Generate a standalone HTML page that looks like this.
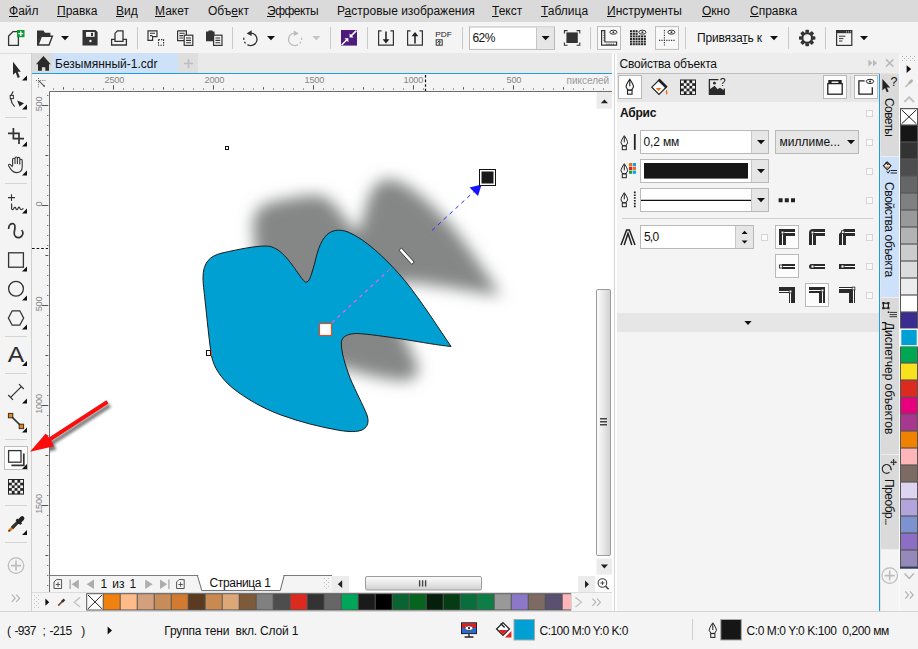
<!DOCTYPE html>
<html lang="ru">
<head>
<meta charset="utf-8">
<title>CorelDRAW</title>
<style>
html,body{margin:0;padding:0;}
body{width:918px;height:649px;overflow:hidden;position:relative;background:#f4f4f4;
 font-family:"Liberation Sans","DejaVu Sans",sans-serif;font-size:12px;color:#111;}
.a{position:absolute;}
.t{position:absolute;white-space:nowrap;line-height:16px;font-size:12px;}
u{text-decoration:underline;text-underline-offset:1px;}
#menubar{left:0;top:0;width:918px;height:22px;background:#dadada;}
#toolbar{left:0;top:22px;width:918px;height:31px;background:#f4f4f4;}
#tabstrip{left:32px;top:53px;width:580px;height:20px;background:#e9e9e9;}
#doctab{left:51px;top:53px;width:127px;height:20px;background:#cde2f9;}
#blueline{left:32px;top:73px;width:580px;height:1.200px;background:#1a9ff0;}
#hruler{left:32px;top:74px;width:580px;height:18px;background:#f4f4f4;}
#vruler{left:32px;top:92px;width:18px;height:483px;background:#f4f4f4;}
#canvas{left:50px;top:92px;width:546px;height:483px;background:#fff;}
#vscroll{left:596px;top:92px;width:16px;height:483px;background:#f4f4f4;}
#pagenav{left:50px;top:575px;width:562px;height:17px;background:#f4f4f4;}
#palbar{left:32px;top:592px;width:580px;height:20px;background:#f4f4f4;}
#status{left:0;top:612px;width:918px;height:37px;background:#f4f4f4;}
#toolbox{left:0;top:53px;width:32px;height:559px;background:#f4f4f4;}
#docker{left:612px;top:53px;width:268px;height:559px;background:#f4f4f4;}
#vtabs{left:880px;top:53px;width:18px;height:559px;background:#e4e4e4;}
#rpal{left:898px;top:53px;width:20px;height:559px;background:#f4f4f4;}

.rl{top:73px;font-size:9.200px;letter-spacing:-0.200px;line-height:14px;}
.rv{left:39.200px;font-size:9.200px;letter-spacing:-0.200px;line-height:10px;transform:translate(-50%,-50%) rotate(-90deg);}

.vt{left:897px;font-size:12px;line-height:16px;transform-origin:0 0;transform:rotate(90deg);}
#tbline{left:0;top:53px;width:918px;height:1px;background:#dedede;}
</style>
</head>
<body>
<div id="menubar" class="a"></div>
<div id="toolbar" class="a"></div>
<div id="toolbox" class="a"></div>
<div id="tbline" class="a"></div>
<div id="tabstrip" class="a"></div>
<div id="doctab" class="a"></div>
<div id="blueline" class="a"></div>
<div id="hruler" class="a"></div>
<div id="vruler" class="a"></div>
<div id="canvas" class="a"></div>
<div id="vscroll" class="a"></div>
<div id="pagenav" class="a"></div>
<div id="palbar" class="a"></div>
<div id="docker" class="a"></div>
<div id="vtabs" class="a"></div>
<div id="rpal" class="a"></div>
<div id="status" class="a"></div>

<!-- MENU -->
<div id="menu">
<span class="t" style="left:9px;top:3px"><u>Ф</u>айл</span>
<span class="t" style="left:57px;top:3px"><u>П</u>равка</span>
<span class="t" style="left:116px;top:3px"><u>В</u>ид</span>
<span class="t" style="left:155px;top:3px"><u>М</u>акет</span>
<span class="t" style="left:208px;top:3px">Объ<u>е</u>кт</span>
<span class="t" style="left:267px;top:3px;letter-spacing:-0.500px"><u>Э</u>ффекты</span>
<span class="t" style="left:337px;top:3px">Р<u>а</u>стровые изображения</span>
<span class="t" style="left:492px;top:3px"><u>Т</u>екст</span>
<span class="t" style="left:541px;top:3px"><u>Т</u>аблица</span>
<span class="t" style="left:607px;top:3px"><u>И</u>нструменты</span>
<span class="t" style="left:702px;top:3px"><u>О</u>кно</span>
<span class="t" style="left:750px;top:3px"><u>С</u>правка</span>
</div>

<!-- TOOLBAR ICONS -->
<svg class="a" style="left:0;top:22px" width="918" height="32" viewBox="0 22 918 32" fill="none" stroke="#333" stroke-width="1.3">
<g stroke="#c9c9c9" stroke-width="1">
<path d="M137.5 27V49M232.5 27V49M330.5 27V49M367.5 27V49M462.5 27V49M590.5 27V49M685.5 27V49M788.5 27V49M825.5 27V49"/>
</g>
<!-- new -->
<path d="M8.6 45.4V36L13 31.6H18.4V45.4Z"/>
<rect x="17" y="30" width="7.5" height="7.2" fill="#0a9a2e" stroke="none"/>
<path d="M18.3 33.6H23.2M20.75 31.2V36" stroke="#fff" stroke-width="1.4"/>
<!-- open -->
<path d="M37 45.6V30.6H43.4L45 32.8H50.4V36H41L37.6 45.6Z" fill="#333" stroke="none"/>
<path d="M38 45 41.4 36.2H52.4L49 45Z" fill="#f4f4f4" stroke-width="1.4"/>
<path d="M61 36H69L65 40.2Z" fill="#111" stroke="none"/>
<!-- save -->
<path d="M82.5 30H95.5L97.6 32V45.6H82.5Z" fill="#333" stroke="none"/>
<rect x="86" y="32" width="8.6" height="4.8" fill="#f4f4f4" stroke="none"/>
<rect x="91" y="32.8" width="2" height="3.2" fill="#333" stroke="none"/>
<circle cx="90.4" cy="41" r="1.2" fill="#f4f4f4" stroke="none"/>
<!-- print -->
<path d="M115 39.4H111.6V45H126.4V39.4H123"/>
<path d="M115 41.4V33.4L117.4 30.8H123V41.4Z"/>
<!-- cut -->
<path d="M148 30.8H157V36.6H152.6V40.4H148Z" stroke-width="1.2"/>
<path d="M150 33.2H155M150 35.6H152.4" stroke-width="1.1"/>
<path d="M158.5 39.6H163.6V45.2H158.5Z" stroke-width="1.1" stroke-dasharray="1.4 1.1"/>
<!-- copy -->
<path d="M177.6 30.8H186.4V35M184 40.6H177.6V30.8" stroke-width="1.2"/>
<path d="M179.4 33.2H184.6M179.4 35.6H183M179.4 38H183" stroke-width="1.1"/>
<rect x="184.2" y="35.2" width="8.6" height="10.2" stroke-width="1.2"/>
<path d="M186 38H191M186 40.4H191M186 42.8H191" stroke-width="1.1"/>
<!-- paste -->
<path d="M206 31.6H208.4V30.4H212.6V31.6H214.6V35H213V41.2H206Z" fill="#333" stroke="none"/>
<rect x="213.6" y="35.2" width="8.4" height="10.2" stroke-width="1.2"/>
<path d="M215.4 38H220.2M215.4 40.4H220.2M215.4 42.8H220.2" stroke-width="1.1"/>
<!-- undo -->
<path d="M250.8 33.2A6.2 6.2 0 1 1 247.4 44.6" stroke-width="1.3"/>
<path d="M245.6 43.4A6.2 6.2 0 0 1 244.6 36" stroke-width="1.3" stroke-dasharray="2 2"/>
<path d="M246.6 33.4 251.6 30.2V36Z" fill="#333" stroke="none"/>
<path d="M267 36H275L271 40.2Z" fill="#111" stroke="none"/>
<!-- redo -->
<g stroke="#bdbdbd">
<path d="M294.6 33.2A6.2 6.2 0 1 0 298 44.6" stroke-width="1.3"/>
<path d="M299.8 43.4A6.2 6.2 0 0 0 300.8 36" stroke-width="1.3" stroke-dasharray="2 2"/>
<path d="M298.8 33.4 293.8 30.2V36Z" fill="#bdbdbd" stroke="none"/>
<path d="M312.4 36H320.4L316.4 40.2Z" fill="#c4c4c4" stroke="none"/>
</g>
<!-- purple -->
<rect x="341" y="30" width="16" height="15.6" fill="#4d1b7b" stroke="none"/>
<path d="M356.4 30.6 350.6 36.4M341.6 45 347.4 39.2" stroke="#fff" stroke-width="1.5"/>
<path d="M349.6 33.4V37.4H353.6ZM348.4 42.2V38.2H344.4Z" fill="#fff" stroke="none"/>
<!-- import -->
<path d="M381.6 30.8H378.6V45.2H393.4V30.8H390.4" stroke-width="1.2"/>
<path d="M386 31.6V40" stroke-width="1.7"/><path d="M382.6 39.2H389.4L386 43.4Z" fill="#222" stroke="none"/>
<!-- export -->
<path d="M410.6 30.8H407.6V45.2H422.4V30.8H419.4" stroke-width="1.2"/>
<path d="M415 35V43.6" stroke-width="1.7"/><path d="M411.6 36.2H418.4L415 32Z" fill="#222" stroke="none"/>
<!-- pdf -->
<text x="435.2" y="37" font-size="8" fill="#222" stroke="none" font-family="Liberation Sans, sans-serif" textLength="16.6" lengthAdjust="spacingAndGlyphs">PDF</text>
<rect x="436.2" y="39.8" width="6" height="5.4" stroke-width="1"/>
<path d="M439.2 45V41.4M437.4 42.6 439.2 40.8 441 42.6" stroke-width="1"/>
<!-- zoom box -->
<rect x="469.5" y="27" width="85" height="22.4" fill="#fff" stroke="#b9b9b9" stroke-width="1"/>
<rect x="536.6" y="27.5" width="17.4" height="21.4" fill="#e6e6e6" stroke="none"/>
<path d="M536.5 27.5V49" stroke="#c6c6c6" stroke-width="1"/>
<path d="M541.6 36H549.6L545.6 40.2Z" fill="#111" stroke="none"/>
<!-- fullscreen -->
<rect x="566.4" y="32.4" width="11.4" height="10.6" fill="#333" stroke="none"/>
<path d="M564.4 33.4V30.6H567.6M576.6 30.6H579.8V33.4M579.8 42.4V45.2H576.6M567.6 45.2H564.4V42.4" stroke-width="1.1"/>
<!-- rulers btn -->
<rect x="597.5" y="26.6" width="23" height="22.8" fill="#f9f9f9" stroke="#bdbdbd" stroke-width="1"/>
<path d="M601.6 30.6H604.8V42H616.6V45.2H601.6Z" stroke-width="1.2"/>
<path d="M603.4 33H604.8M603.4 35.4H604.8M603.4 37.8H604.8M603.4 40.2H604.8M606.8 43.6V45M609 43.6V45M611.2 43.6V45M613.4 43.6V45" stroke-width="0.9"/>
<ellipse cx="613.4" cy="32.2" rx="3.6" ry="2" stroke-width="1"/><circle cx="613.4" cy="32.2" r="1" fill="#333" stroke="none"/>
<!-- grid -->
<g fill="#2a2a2a" stroke="none"><rect x="630.00" y="30.20" width="2.100" height="2" /><rect x="632.75" y="30.20" width="2.100" height="2" /><rect x="635.50" y="30.20" width="2.100" height="2" /><rect x="630.00" y="32.80" width="2.100" height="2" /><rect x="632.75" y="32.80" width="2.100" height="2" /><rect x="635.50" y="32.80" width="2.100" height="2" /><rect x="630.00" y="35.40" width="2.100" height="2" /><rect x="632.75" y="35.40" width="2.100" height="2" /><rect x="635.50" y="35.40" width="2.100" height="2" /><rect x="638.25" y="35.40" width="2.100" height="2" /><rect x="641.00" y="35.40" width="2.100" height="2" /><rect x="643.75" y="35.40" width="2.100" height="2" /><rect x="630.00" y="38.00" width="2.100" height="2" /><rect x="632.75" y="38.00" width="2.100" height="2" /><rect x="635.50" y="38.00" width="2.100" height="2" /><rect x="638.25" y="38.00" width="2.100" height="2" /><rect x="641.00" y="38.00" width="2.100" height="2" /><rect x="643.75" y="38.00" width="2.100" height="2" /><rect x="630.00" y="40.60" width="2.100" height="2" /><rect x="632.75" y="40.60" width="2.100" height="2" /><rect x="635.50" y="40.60" width="2.100" height="2" /><rect x="638.25" y="40.60" width="2.100" height="2" /><rect x="641.00" y="40.60" width="2.100" height="2" /><rect x="643.75" y="40.60" width="2.100" height="2" /><rect x="630.00" y="43.20" width="2.100" height="2" /><rect x="632.75" y="43.20" width="2.100" height="2" /><rect x="635.50" y="43.20" width="2.100" height="2" /><rect x="638.25" y="43.20" width="2.100" height="2" /><rect x="641.00" y="43.20" width="2.100" height="2" /><rect x="643.75" y="43.20" width="2.100" height="2" /></g>
<ellipse cx="642.400" cy="32.200" rx="3.600" ry="2" stroke-width="1" fill="#f4f4f4"/><circle cx="642.400" cy="32.200" r="1" fill="#333" stroke="none"/>
<!-- guides btn -->
<rect x="655.5" y="26.6" width="23" height="22.8" fill="#f9f9f9" stroke="#bdbdbd" stroke-width="1"/>
<path d="M664.4 30V46M659 40.4H675" stroke-width="1.1" stroke-dasharray="1.2 1.2"/>
<ellipse cx="671.4" cy="32.2" rx="3.6" ry="2" stroke-width="1"/><circle cx="671.4" cy="32.2" r="1" fill="#333" stroke="none"/>
<path d="M770 36H778L774 40.2Z" fill="#111" stroke="none"/>
<!-- gear -->
<g transform="translate(807.200 38)">
<circle r="4.900" stroke-width="2.300"/>
<g fill="#333" stroke="none">
<rect x="-1.800" y="-8.200" width="3.600" height="2.800" rx="0.800"/><rect x="-1.800" y="5.400" width="3.600" height="2.800" rx="0.800"/>
<rect x="-8.200" y="-1.800" width="2.800" height="3.600" rx="0.800"/><rect x="5.400" y="-1.800" width="2.800" height="3.600" rx="0.800"/>
<g transform="rotate(45)"><rect x="-1.800" y="-8.200" width="3.600" height="2.800" rx="0.800"/><rect x="-1.800" y="5.400" width="3.600" height="2.800" rx="0.800"/>
<rect x="-8.200" y="-1.800" width="2.800" height="3.600" rx="0.800"/><rect x="5.400" y="-1.800" width="2.800" height="3.600" rx="0.800"/></g>
</g></g>
<!-- window -->
<rect x="836.6" y="30.6" width="15.2" height="14.8" stroke-width="1.2"/>
<rect x="836.6" y="30.6" width="15.2" height="2.6" fill="#333" stroke="none"/>
<path d="M839 36.2H845.4M839 38.6H843.4M839 41H842.4" stroke-width="1"/>
<path d="M846 31.9H847M848 31.9H849M850 31.9H851" stroke="#eee" stroke-width="0.8"/>
<path d="M860 36H868L864 40.2Z" fill="#111" stroke="none"/>
</svg>
<span class="t" style="left:472.500px;top:30px;letter-spacing:-0.550px">62%</span>
<span class="t" style="left:697px;top:30px;letter-spacing:-0.200px">Привяза<u>т</u>ь к</span>

<!-- TOOLBOX -->
<svg class="a" style="left:0;top:53px" width="50" height="559" viewBox="0 53 50 559" fill="none" stroke="#333" stroke-width="1.3">
<path d="M31.5 53V611" stroke="#d0d0d0" stroke-width="1"/>
<g stroke="#d4d4d4" stroke-width="1"><path d="M5 117.5H27M5 183.5H27M5 336.5H27M5 373.5H27M5 439.5H27M5 505.5H27M5 542.5H27"/></g>
<!-- pick -->
<path d="M13 61.800V74.800L15.700 72.500L17.700 77.900L19.800 77L17.700 71.700H20.800Z" fill="#2a2a2a" stroke="none"/>
<path d="M27 80.6V75.6L22 80.6Z" fill="#111" stroke="none"/>
<!-- shape -->
<path d="M13.2 91.4C9.6 96 10.2 102.4 14.6 106.6" stroke-width="1.2"/>
<rect x="10.2" y="95.4" width="3.2" height="3.2" fill="#f4f4f4" stroke-width="1"/>
<path d="M17.2 100.4 24 103.2 19.6 106.6Z" fill="#222" stroke="none"/>
<path d="M27 109.6V104.6L22 109.6Z" fill="#111" stroke="none"/>
<!-- crop -->
<path d="M13.400 128V138.600H24M8 133.400H19V144" stroke-width="1.700"/>
<path d="M27 146.6V141.6L22 146.6Z" fill="#111" stroke="none"/>
<!-- hand -->
<path d="M12.6 166V159.4a1.2 1.2 0 0 1 2.4 0V164M15 164V158.2a1.2 1.2 0 0 1 2.4 0V164M17.4 164V158.6a1.2 1.2 0 0 1 2.4 0V164.4M19.8 164.4V160.4a1.2 1.2 0 0 1 2.4 0V167C22.2 170.6 20 172.6 16.8 172.6C13.6 172.6 12 171 10.4 168.6L8.6 165.8C8 164.6 9.400 163.800 10.4 164.6L12.6 167" stroke-width="1.1"/>
<path d="M27 175.6V170.6L22 175.6Z" fill="#111" stroke="none"/>
<!-- freehand -->
<path d="M8 197.600H15M11.500 194.200V201" stroke-width="1.100"/>
<path d="M11.600 203.400V208.400C11.600 210 13.400 210 13.800 208.600C14.200 206.800 15.400 206.800 15.800 208.400C16.200 210 17.600 210 18 208.400C18.400 206.800 19.600 206.800 20 208.400C20.400 209.800 21.600 210 23.400 208.400" stroke-width="1.200"/>
<path d="M27 213.4V208.4L22 213.4Z" fill="#111" stroke="none"/>
<!-- artistic -->
<path d="M8.600 229C8.600 224.600 11.400 223 13.400 223.800C16.400 225 14.600 229.600 14.200 232.400C13.800 236.400 16.800 238.400 19.800 237.400C23 236.200 24 232.400 21.600 230" stroke-width="1.700"/>
<!-- rect -->
<rect x="8.600" y="252.800" width="14.800" height="14.400" stroke-width="1.300"/>
<path d="M27 271.4V266.4L22 271.4Z" fill="#111" stroke="none"/>
<!-- ellipse -->
<circle cx="16" cy="288.800" r="7.400" stroke-width="1.300"/>
<path d="M27 300.4V295.4L22 300.4Z" fill="#111" stroke="none"/>
<!-- polygon -->
<path d="M8.400 318 12.200 310.800H19.800L23.600 318L19.800 325.200H12.200Z" stroke-width="1.300"/>
<path d="M27 329.4V324.4L22 329.4Z" fill="#111" stroke="none"/>
<!-- text -->
<text x="7.800" y="362.400" font-size="21.500" textLength="16.400" lengthAdjust="spacingAndGlyphs" fill="#2e2e2e" stroke="none" font-family="Liberation Sans, sans-serif">A</text>
<path d="M27 366V361.0L22 366Z" fill="#111" stroke="none"/>
<!-- dimension -->
<path d="M10.600 397.400 21.400 386.600" stroke-width="1.300"/>
<path d="M8.200 395 13 399.800M19 384.200 23.800 389" stroke-width="1.200"/>
<path d="M27 403.4V398.4L22 403.4Z" fill="#111" stroke="none"/>
<!-- connector -->
<path d="M10.600 415.600 21.400 426.400" stroke-width="1.500"/>
<rect x="8.400" y="413.400" width="4.400" height="4.400" fill="#f08010" stroke-width="1"/>
<rect x="19.200" y="424.200" width="4.400" height="4.400" fill="#f08010" stroke-width="1"/>
<path d="M27 432.4V427.4L22 432.4Z" fill="#111" stroke="none"/>
<!-- shadow (selected) -->
<rect x="4.500" y="446.500" width="23" height="23" fill="#fcfcfc" stroke="#bdbdbd" stroke-width="1"/>
<rect x="8.600" y="450.600" width="12.400" height="11.600" fill="#fff" stroke-width="1.300"/>
<path d="M23.800 453.400V465.400H11.400" stroke-width="1.700"/>
<path d="M27 469V464.0L22 469Z" fill="#111" stroke="none"/>
<!-- transparency -->
<rect x="8" y="479" width="16" height="15.600" fill="#222" stroke="none"/>
<g fill="#f4f4f4" stroke="none">
<rect x="9" y="480" width="2.800" height="2.700"/><rect x="14.600" y="480" width="2.800" height="2.700"/><rect x="20.200" y="480" width="2.800" height="2.700"/>
<rect x="11.800" y="482.700" width="2.800" height="2.700"/><rect x="17.400" y="482.700" width="2.800" height="2.700"/>
<rect x="9" y="485.400" width="2.800" height="2.700"/><rect x="14.600" y="485.400" width="2.800" height="2.700"/><rect x="20.200" y="485.400" width="2.800" height="2.700"/>
<rect x="11.800" y="488.100" width="2.800" height="2.700"/><rect x="17.400" y="488.100" width="2.800" height="2.700"/>
<rect x="9" y="490.800" width="2.800" height="2.700"/><rect x="14.600" y="490.800" width="2.800" height="2.700"/><rect x="20.200" y="490.800" width="2.800" height="2.700"/>
</g>
<!-- eyedropper -->
<path d="M9 531 17.400 522.600" stroke="#e8740c" stroke-width="2.600"/>
<path d="M12 528 18.600 521.400" stroke="#333" stroke-width="3.200"/>
<path d="M8.400 531.600 9.800 530.200" stroke="#333" stroke-width="1.400"/>
<path d="M16.400 519.400 21.200 524.200" stroke="#222" stroke-width="2.400"/>
<path d="M19 521.600 22.200 518.400" stroke="#222" stroke-width="4.400" stroke-linecap="round"/>
<path d="M27 535V530.0L22 535Z" fill="#111" stroke="none"/>
<!-- plus -->
<circle cx="16" cy="565.600" r="7.800" stroke="#bcbcbc" stroke-width="1.200"/>
<path d="M11 565.600H21M16 560.600V570.600" stroke="#bcbcbc" stroke-width="1.600"/>
<path d="M11.800 594.600 15.200 598.200 11.800 601.800M16.200 594.600 19.600 598.200 16.200 601.800" stroke="#b0b0b0" stroke-width="1.100"/>
</svg>

<!-- DOC TAB + RULERS -->
<div class="a" style="left:32px;top:53px;width:19.500px;height:20px;background:#dbdbdb"></div>
<div class="a" style="left:178px;top:53px;width:20px;height:20px;background:#dedede"></div>
<svg class="a" style="left:32px;top:53px" width="585" height="560" viewBox="32 53 585 560" fill="none" stroke="#333">
<path d="M43.400 56 36 64.300H38V70.800H41.900V67.300H45.300V70.800H49V64.300H50.800Z" fill="#2a2a2a" stroke="none"/>
<path d="M184 63.5H193M188.500 59V68" stroke="#bdbdbd" stroke-width="1.600"/>
<!-- origin icon -->
<path d="M38.400 80.400 44 85.800" stroke="#555" stroke-width="1.100"/>
<path d="M36 80.500H46M38.500 78V88" stroke="#777" stroke-width="1" stroke-dasharray="1 1.100"/>
<rect x="43.400" y="85.200" width="1.600" height="1.600" fill="#555" stroke="none"/>
<path d="M53.5 88.5V89.6M63.5 87.2V89.6M73.5 88.5V89.6M83.5 88.5V89.6M93.5 88.5V89.6M103.5 88.5V89.6M113.5 85.2V89.6M123.5 88.5V89.6M133.5 88.5V89.6M143.5 88.5V89.6M153.5 88.5V89.6M163.5 87.2V89.6M173.5 88.5V89.6M183.5 88.5V89.6M193.5 88.5V89.6M203.5 88.5V89.6M213.5 85.2V89.6M223.5 88.5V89.6M233.5 88.5V89.6M243.5 88.5V89.6M253.5 88.5V89.6M263.5 87.2V89.6M273.5 88.5V89.6M283.5 88.5V89.6M293.5 88.5V89.6M303.5 88.5V89.6M313.5 85.2V89.6M323.5 88.5V89.6M333.5 88.5V89.6M343.5 88.5V89.6M353.5 88.5V89.6M363.5 87.2V89.6M373.5 88.5V89.6M383.5 88.5V89.6M393.5 88.5V89.6M403.5 88.5V89.6M413.5 85.2V89.6M423.5 88.5V89.6M433.5 88.5V89.6M443.5 88.5V89.6M453.5 88.5V89.6M463.5 87.2V89.6M473.5 88.5V89.6M483.5 88.5V89.6M493.5 88.5V89.6M503.5 88.5V89.6M513.5 85.2V89.6M523.5 88.5V89.6M533.5 88.5V89.6M543.5 88.5V89.6M553.5 88.5V89.6M563.5 87.2V89.6M573.5 88.5V89.6M583.5 88.5V89.6M593.5 88.5V89.6M603.5 88.5V89.6" stroke="#555" stroke-width="1"/>
<path d="M47.2 95.5H48.3M41.6 105.5H48.3M47.2 115.5H48.3M47.2 125.5H48.3M47.2 135.5H48.3M47.2 145.5H48.3M45.4 155.5H48.3M47.2 165.5H48.3M47.2 175.5H48.3M47.2 185.5H48.3M47.2 195.5H48.3M41.6 205.5H48.3M47.2 215.5H48.3M47.2 225.5H48.3M47.2 235.5H48.3M47.2 245.5H48.3M45.4 255.5H48.3M47.2 265.5H48.3M47.2 275.5H48.3M47.2 285.5H48.3M47.2 295.5H48.3M41.6 305.5H48.3M47.2 315.5H48.3M47.2 325.5H48.3M47.2 335.5H48.3M47.2 345.5H48.3M45.4 355.5H48.3M47.2 365.5H48.3M47.2 375.5H48.3M47.2 385.5H48.3M47.2 395.5H48.3M41.6 405.5H48.3M47.2 415.5H48.3M47.2 425.5H48.3M47.2 435.5H48.3M47.2 445.5H48.3M45.4 455.5H48.3M47.2 465.5H48.3M47.2 475.5H48.3M47.2 485.5H48.3M47.2 495.5H48.3M41.6 505.5H48.3M47.2 515.5H48.3M47.2 525.5H48.3M47.2 535.5H48.3M47.2 545.5H48.3M45.4 555.5H48.3M47.2 565.5H48.3M47.2 575.5H48.3M47.2 585.5H48.3" stroke="#555" stroke-width="1"/>
<path d="M49.500 592V91.500H612" stroke="#6e6e6e" stroke-width="1"/>
<path d="M32 248.500H48" stroke="#111" stroke-width="1.200" stroke-dasharray="2.600 2"/>
<path d="M425.500 75V91" stroke="#111" stroke-width="1.200" stroke-dasharray="2.600 2"/>
</svg>
<span class="t" style="left:55px;top:56px;font-size:12px;color:#111">Безымянный-1.cdr</span>
<div id="hlabels" style="color:#858585">
<span class="t rl" style="left:104.500px">2500</span>
<span class="t rl" style="left:204.500px">2000</span>
<span class="t rl" style="left:304.500px">1500</span>
<span class="t rl" style="left:403.500px">1000</span>
<span class="t rl" style="left:506.500px">500</span>
<span class="t rl" style="left:566.500px;top:74px;color:#9a9a9a;font-size:10px;letter-spacing:0">пикселей</span>
</div>
<div id="vlabels" style="color:#858585">
<span class="t rv" style="top:104px">500</span>
<span class="t rv" style="top:204px">0</span>
<span class="t rv" style="top:304px">500</span>
<span class="t rv" style="top:404px">1000</span>
<span class="t rv" style="top:504px">1500</span>
</div>

<!-- CANVAS CONTENT -->
<svg class="a" style="left:50px;top:92px" width="546" height="483" viewBox="50 92 546 483" fill="none">
<defs>
<filter id="blur" x="-30%" y="-30%" width="160%" height="160%"><feGaussianBlur stdDeviation="7.500"/></filter>
<filter id="ablur" x="-30%" y="-30%" width="160%" height="160%"><feGaussianBlur stdDeviation="1.800"/></filter>
</defs>
<g transform="translate(50 -51)" filter="url(#blur)"><path d="M203 278C203 262 210 256 222 253C240 249 255 246 266 246C280 246 290 262 298 273C302 279 305 283 307 282C310 281 312 272 314.500 264C318 248 322 238 329 233C334 230 340 229 348 232C365 239 385 258 400 275C415 292 432 318 451 346.500C440 345.500 420 342 405 339.500C385 336.500 368 334 357 333.500C349 333.500 342 336 341.400 342C341 352 345 364 350 378C356 392 363 405 367 415C370 424 366 428 362 430C357 432 350 432 340 430.500C320 427 300 422 281 415C262 408 245 398 232 387.500C221 378 214 368 211.500 356C209 340 207 318 205 300C204 290 203 284 203 278Z" fill="#858787"/></g>
<path d="M203 278C203 262 210 256 222 253C240 249 255 246 266 246C280 246 290 262 298 273C302 279 305 283 307 282C310 281 312 272 314.500 264C318 248 322 238 329 233C334 230 340 229 348 232C365 239 385 258 400 275C415 292 432 318 451 346.500C440 345.500 420 342 405 339.500C385 336.500 368 334 357 333.500C349 333.500 342 336 341.400 342C341 352 345 364 350 378C356 392 363 405 367 415C370 424 366 428 362 430C357 432 350 432 340 430.500C320 427 300 422 281 415C262 408 245 398 232 387.500C221 378 214 368 211.500 356C209 340 207 318 205 300C204 290 203 284 203 278Z" fill="#00a0d3" stroke="#1c1c1c" stroke-width="1"/>
<!-- dashed vector -->
<path d="M332 322.600 388 271" stroke="#f45fe6" stroke-width="1.200" stroke-dasharray="3.500 4"/>
<path d="M388 271 432 230.400" stroke="#8a8a9a" stroke-width="1" stroke-dasharray="4 4"/>
<path d="M432 230.400 474 191.600" stroke="#2a2aff" stroke-width="1" stroke-dasharray="4 4"/>
<path d="M481.600 184.600 469.600 187.600 478 196Z" fill="#1414ff"/>
<!-- end handle -->
<rect x="479.500" y="169.500" width="16" height="16" fill="#fff" stroke="#111" stroke-width="1"/>
<rect x="481.500" y="171.500" width="12" height="12" fill="#1a1a1a"/>
<!-- slider -->
<g transform="translate(406.600 256.200) rotate(48)"><rect x="-9.500" y="-1.700" width="19" height="3.400" fill="#fff" stroke="#333" stroke-width="0.900"/></g>
<!-- center handle -->
<rect x="319.500" y="323.500" width="12" height="12" fill="#fff" stroke="#e0501e" stroke-width="1.200"/>
<!-- small handles -->
<rect x="225.500" y="146.500" width="3" height="3" fill="#fff" stroke="#111" stroke-width="1"/>
<rect x="206.500" y="350.500" width="4" height="5" fill="#fff" stroke="#111" stroke-width="1"/>
<path d="M211.400 350.500V356" stroke="#e0501e" stroke-width="1"/>
<!-- red arrow -->
<g filter="url(#ablur)" transform="translate(2.500 3.500)" opacity="0.550">
<path d="M30 451.800 45.700 433.600 49 437.400 106.300 400.200 108.600 403.600 51.300 440.800 54 446.200Z" fill="#000"/>
</g>
</svg>
<svg class="a" style="left:20px;top:390px" width="100" height="80" viewBox="20 390 100 80">
<path d="M30 451.800 45.700 433.600 49 437.400 106.300 400.200 108.600 403.600 51.300 440.800 54 446.200Z" fill="#fb0d0d"/>
</svg>

<!-- SCROLLBARS, PAGE NAV, PALETTE -->
<svg class="a" style="left:32px;top:92px" width="585" height="520" viewBox="32 92 585 520" fill="none">
<defs>
<linearGradient id="thv" x1="0" x2="1" y1="0" y2="0"><stop offset="0" stop-color="#fdfdfd"/><stop offset="0.500" stop-color="#e8e8e8"/><stop offset="1" stop-color="#cfcfcf"/></linearGradient>
<linearGradient id="thh" x1="0" x2="0" y1="0" y2="1"><stop offset="0" stop-color="#fdfdfd"/><stop offset="0.500" stop-color="#e8e8e8"/><stop offset="1" stop-color="#cfcfcf"/></linearGradient>
</defs>
<!-- vscroll -->
<rect x="596" y="92" width="16" height="483" fill="#fff"/>
<rect x="596.500" y="92" width="15.500" height="16.600" fill="#ececec"/>
<path d="M600.800 103.200 604.400 99.400 608 103.200Z" fill="#222"/>
<rect x="596.500" y="289.500" width="14" height="266" rx="1.500" fill="url(#thv)" stroke="#9c9c9c" stroke-width="1"/>
<path d="M600 418.800H607M600 421.800H607M600 424.800H607" stroke="#444" stroke-width="1.400"/>
<rect x="596.500" y="558.500" width="15.500" height="16" fill="#ececec"/>
<path d="M600.800 564.600 604.400 568.400 608 564.600Z" fill="#222"/>
<!-- bottom line of canvas -->
<path d="M50 575.500H332" stroke="#7a7a7a" stroke-width="1"/>
<!-- page nav icons -->
<g stroke="#555" stroke-width="1">
<path d="M54 588.500V582L56.400 579.600H61.600V588.500Z"/><path d="M55.800 584.500H60.200M58 582.200V586.800"/>
<path d="M176.600 588.500V582L179 579.600H184.200V588.500Z"/><path d="M178.400 584.500H182.800M180.600 582.200V586.800"/>
</g>
<g fill="#adadad"><path d="M69.400 579.400H70.800V589H69.400ZM78.800 579.400V589L71.600 584.200ZM94 579.400V589L86.600 584.200ZM145.200 579.400V589L152.600 584.200ZM160 579.400V589L167.200 584.200ZM168.200 579.400H169.600V589H168.200Z"/></g>
<!-- page tab -->

<path d="M197.400 575.500 201.800 590.600H280.200L284.200 575.500Z" fill="#fff" stroke="#6a6a6a" stroke-width="1"/>
<path d="M198.200 575.500H283.400" stroke="#fff" stroke-width="1.600"/>
<!-- grip -->
<path d="M324.500 578V590M328.500 578V590" stroke="#c4c4c4" stroke-width="1" stroke-dasharray="1 3"/><path d="M326.500 580V590" stroke="#c4c4c4" stroke-width="1" stroke-dasharray="1 3"/>
<!-- hscroll -->
<rect x="332" y="575" width="280" height="17" fill="#fff"/><rect x="332" y="576" width="17" height="16" fill="#ececec"/><rect x="578" y="576" width="17" height="16" fill="#ececec"/>
<path d="M342.200 580.300V588.100L337.800 584.200Z" fill="#222"/>
<rect x="365.500" y="576.500" width="116" height="13.500" rx="1.500" fill="url(#thh)" stroke="#9c9c9c" stroke-width="1"/>
<path d="M419.600 580.300V586.500M422.600 580.300V586.500M425.600 580.300V586.500" stroke="#444" stroke-width="1.400"/>
<path d="M585 580.600V588L589 584.300Z" fill="#222"/>
<!-- zoom icon -->
<circle cx="602.400" cy="583" r="4.300" stroke="#444" stroke-width="1.100"/>
<path d="M605.600 586.200 608.600 589.200" stroke="#444" stroke-width="1.600"/>
<path d="M600.400 583H604.400M602.400 581V585" stroke="#444" stroke-width="1"/>
<!-- palette bar -->
<path d="M34.500 595V609M38.500 595V609" stroke="#c4c4c4" stroke-width="1" stroke-dasharray="1 3"/><path d="M36.500 597V609" stroke="#c4c4c4" stroke-width="1" stroke-dasharray="1 3"/><path d="M32 592.500H612" stroke="#dcdcdc" stroke-width="1"/>
<path d="M45.400 598.600V605.800L49.200 602.200Z" fill="#111"/>
<path d="M58.200 605.600 62.400 601.400" stroke="#7a4a2a" stroke-width="1.600"/><path d="M62 601.800 64.400 599.400" stroke="#333" stroke-width="2.400"/>
<path d="M80.200 597.400 74.200 602.200 80.200 607" stroke="#c4c4c4" stroke-width="1.400"/>
<rect x="86.200" y="593.200" width="485" height="17.300" fill="#555"/>
<rect x="87.200" y="594.200" width="15.500" height="15.300" fill="#fff"/>
<path d="M88 595 102 608.800M102 595 88 608.800" stroke="#222" stroke-width="1"/>
<rect x="103.7" y="594.200" width="16.0" height="15.300" fill="#f08010"/><rect x="120.7" y="594.200" width="16.0" height="15.300" fill="#ffbb88"/><rect x="137.7" y="594.200" width="16.0" height="15.300" fill="#d2a07c"/><rect x="154.7" y="594.200" width="16.0" height="15.300" fill="#c88c5a"/><rect x="171.7" y="594.200" width="16.0" height="15.300" fill="#d27a30"/><rect x="188.7" y="594.200" width="16.0" height="15.300" fill="#5a3a20"/><rect x="205.7" y="594.200" width="16.0" height="15.300" fill="#c88a50"/><rect x="222.7" y="594.200" width="16.0" height="15.300" fill="#dca878"/><rect x="239.7" y="594.200" width="16.0" height="15.300" fill="#7d5a3a"/><rect x="256.7" y="594.200" width="16.0" height="15.300" fill="#808080"/><rect x="273.7" y="594.200" width="16.0" height="15.300" fill="#4d4d4d"/><rect x="290.7" y="594.200" width="16.0" height="15.300" fill="#dc2b1e"/><rect x="307.7" y="594.200" width="16.0" height="15.300" fill="#333333"/><rect x="324.7" y="594.200" width="16.0" height="15.300" fill="#666666"/><rect x="341.7" y="594.200" width="16.0" height="15.300" fill="#00a65a"/><rect x="358.7" y="594.200" width="16.0" height="15.300" fill="#1a1a1a"/><rect x="375.7" y="594.200" width="16.0" height="15.300" fill="#000000"/><rect x="392.7" y="594.200" width="16.0" height="15.300" fill="#0a6432"/><rect x="409.7" y="594.200" width="16.0" height="15.300" fill="#06641e"/><rect x="426.7" y="594.200" width="16.0" height="15.300" fill="#04200c"/><rect x="443.7" y="594.200" width="16.0" height="15.300" fill="#063c14"/><rect x="460.7" y="594.200" width="16.0" height="15.300" fill="#0a6e3c"/><rect x="477.7" y="594.200" width="16.0" height="15.300" fill="#0f7d46"/><rect x="494.7" y="594.200" width="16.0" height="15.300" fill="#999999"/><rect x="511.7" y="594.200" width="16.0" height="15.300" fill="#8c78c8"/><rect x="528.7" y="594.200" width="16.0" height="15.300" fill="#7d6a63"/><rect x="545.7" y="594.200" width="16.0" height="15.300" fill="#5a5070"/><rect x="562.7" y="594.200" width="8.3" height="15.300" fill="#ffb6b9"/>
<path d="M575.400 597.400 581.400 602.200 575.400 607" stroke="#c4c4c4" stroke-width="1.400"/>
<path d="M592.400 598.600 595.800 602.200 592.400 605.800M597 598.600 600.400 602.200 597 605.800" stroke="#b0b0b0" stroke-width="1.100"/>
</svg>
<span class="t" style="left:100.500px;top:576px;font-size:12px;word-spacing:1.750px">1 из 1</span>
<span class="t" style="left:209.500px;top:575px;letter-spacing:-0.340px">Страница 1</span>

<!-- STATUS BAR -->
<div class="a" style="left:0;top:611px;width:918px;height:38px;background:#f4f4f4;border-top:1px solid #d4d4d4;box-sizing:border-box"></div>
<svg class="a" style="left:0;top:612px" width="918" height="37" viewBox="0 612 918 37" fill="none">
<path d="M107.600 626.600V634.400L112 630.500Z" fill="#111"/>
<!-- monitor -->
<rect x="461.500" y="622.800" width="15" height="10.800" fill="#2a6ad8" stroke="#222" stroke-width="1"/>
<rect x="462" y="623.300" width="14" height="4.600" fill="#e02020"/>
<ellipse cx="469" cy="628.200" rx="4" ry="2.400" fill="#fff" stroke="#333" stroke-width="0.800"/><circle cx="469" cy="628.200" r="1.100" fill="#222"/>
<path d="M469 634V636.600M464.600 637H473.400" stroke="#222" stroke-width="1.300"/>
<!-- fill icon -->
<path d="M503 622.600 509.400 629 503 635.400 496.600 629Z" fill="#fff" stroke="#222" stroke-width="1.300"/>
<path d="M498.600 630H507.400L503 634.400Z" fill="#e02020"/>
<path d="M511.400 631V637.600H505Z" fill="#e02020"/>
<path d="M500.600 623.400 504.600 627.400" stroke="#222" stroke-width="1.400"/>
<rect x="514" y="619.500" width="20.500" height="20.500" fill="#00a0d3" stroke="#a8a8a8" stroke-width="1"/>
<path d="M692.500 619V640" stroke="#cfcfcf" stroke-width="1"/>
<!-- pen -->
<path d="M712.800 622.800C710.600 626 709.200 628.600 709.200 630.400L711 633.400H714.600L716.400 630.400C716.400 628.600 715 626 712.800 622.800ZM712.800 624V630" stroke="#222" stroke-width="1"/>
<rect x="710.700" y="633.600" width="4.200" height="3.800" stroke="#222" stroke-width="1"/>
<rect x="720.800" y="619.500" width="20.500" height="20.500" fill="#161616" stroke="#a8a8a8" stroke-width="1"/>
</svg>
<span class="t" style="left:7px;top:623px">(</span>
<span class="t" style="left:14.400px;top:623px;letter-spacing:-0.650px">-937</span>
<span class="t" style="left:42.500px;top:623px">;</span>
<span class="t" style="left:49.500px;top:623px;letter-spacing:-0.450px">-215</span>
<span class="t" style="left:81.300px;top:623px">)</span>
<span class="t" style="left:164.300px;top:623px;letter-spacing:-0.170px">Группа тени&nbsp; вкл. Слой 1</span>
<span class="t" style="left:539.500px;top:623px;letter-spacing:-0.520px">C:100 M:0 Y:0 K:0</span>
<span class="t" style="left:746.500px;top:623px;letter-spacing:-0.420px">C:0 M:0 Y:0 K:100&nbsp; 0,200 мм</span>

<!-- DOCKER -->
<div class="a" style="left:612px;top:54px;width:5px;height:557px;background:#fdfdfd"></div>
<div class="a" style="left:614px;top:54px;width:1px;height:557px;background:#d6d6d6"></div>
<div class="a" style="left:617px;top:53px;width:301px;height:20px;background:#ededed"></div>
<div class="a" style="left:617px;top:73px;width:263px;height:1px;background:#bfbfbf"></div>
<div class="a" style="left:617px;top:74px;width:262px;height:28px;background:#e7e7e7"></div>
<div class="a" style="left:617px;top:102px;width:262px;height:509px;background:#f4f4f4"></div>
<div class="a" style="left:617px;top:313px;width:262px;height:19px;background:#e6e6e6"></div>
<div class="a" style="left:879px;top:73.500px;width:1.200px;height:537.500px;background:#1e9be8"></div>
<svg class="a" style="left:617px;top:53px" width="301" height="559" viewBox="617 53 301 559" fill="none">
<!-- title buttons -->
<path d="M868.400 59.600V66.400L872.400 63ZM873 59.600V66.400L877 63Z" fill="#b9b9b9"/>
<path d="M886 59.400 893.400 66.600M893.400 59.400 886 66.600" stroke="#b9b9b9" stroke-width="1.500"/>
<!-- tab buttons -->
<rect x="618.500" y="75.500" width="23" height="23" fill="#fcfcfc" stroke="#b9b9b9" stroke-width="1"/>
<g transform="translate(625.600 78.800) scale(1.130 1.070)"><path d="M3.700 0.400C1.600 3.600 0.400 5.800 0.400 7.600L2 10.400H5.400L7 7.600C7 5.800 5.800 3.600 3.700 0.400Z" stroke="#222" stroke-width="1" fill="none"/><path d="M3.700 1.200V7" stroke="#222" stroke-width="1"/><rect x="1.700" y="10.600" width="4" height="3.800" stroke="#222" stroke-width="1" fill="none"/></g>
<!-- fill tab -->
<path d="M659 80 666.200 87.200 659 94.400 651.800 87.200Z" fill="#fdfdfd" stroke="#222" stroke-width="1.200"/>
<path d="M658.600 79.600 666.600 87.600" stroke="#222" stroke-width="2.800"/>
<path d="M655.800 88H661.400L658.600 91Z" fill="#f26a0a"/>
<path d="M666.600 89.600C667.600 91.400 667.600 93.600 666.800 94.800C665.600 94 665.400 91.600 666.600 89.600Z" fill="#f26a0a"/>
<!-- transparency tab -->
<rect x="680" y="79.500" width="16" height="15.400" fill="#222"/>
<g fill="#f4f4f4">
<rect x="681.0" y="80.5" width="2.800" height="2.700"/><rect x="686.6" y="80.5" width="2.800" height="2.700"/><rect x="692.2" y="80.5" width="2.800" height="2.700"/><rect x="683.8" y="83.2" width="2.800" height="2.700"/><rect x="689.4" y="83.2" width="2.800" height="2.700"/><rect x="681.0" y="85.9" width="2.800" height="2.700"/><rect x="686.6" y="85.9" width="2.800" height="2.700"/><rect x="692.2" y="85.9" width="2.800" height="2.700"/><rect x="683.8" y="88.6" width="2.800" height="2.700"/><rect x="689.4" y="88.6" width="2.800" height="2.700"/><rect x="681.0" y="91.3" width="2.800" height="2.700"/><rect x="686.6" y="91.3" width="2.800" height="2.700"/><rect x="692.2" y="91.3" width="2.800" height="2.700"/>
</g>
<!-- image tab -->
<path d="M718.400 79.600H709.400V94.400H724.300V88.400" stroke="#2a2a2a" stroke-width="1.300"/>
<path d="M709.400 94.400V89.600L714.600 85.800L717.600 89.200L720 87.800L724.300 90.600V94.400Z" fill="#2a2a2a"/>
<circle cx="714.400" cy="83.200" r="1.400" fill="#2a2a2a"/>
<!-- right buttons -->
<rect x="823.500" y="75.500" width="23" height="23" fill="#fcfcfc" stroke="#b9b9b9" stroke-width="1"/>
<rect x="827.800" y="83.600" width="14.400" height="10.600" stroke="#222" stroke-width="1.300"/>
<path d="M828.300 83.600V80H841.700V83.600H838.400V81.500H831.600V83.600Z" fill="#222"/>
<path d="M850.500 76V98" stroke="#d0d0d0" stroke-width="1"/>
<rect x="854.500" y="75.500" width="23" height="23" fill="#fcfcfc" stroke="#b9b9b9" stroke-width="1"/>
<path d="M864.600 80.900H858.900V94.100H872.300V87.300" stroke="#222" stroke-width="1.300"/>
<ellipse cx="870" cy="81.400" rx="3.700" ry="2.100" stroke="#222" stroke-width="1"/><circle cx="870" cy="81.400" r="1" fill="#222"/>
<!-- checkboxes -->
<rect x="866.5" y="110.5" width="6" height="6" fill="#fafafa" stroke="#d6d6d6" stroke-width="1"/><rect x="866.5" y="139.5" width="6" height="6" fill="#fafafa" stroke="#d6d6d6" stroke-width="1"/><rect x="866.5" y="168.5" width="6" height="6" fill="#fafafa" stroke="#d6d6d6" stroke-width="1"/><rect x="866.5" y="197.5" width="6" height="6" fill="#fafafa" stroke="#d6d6d6" stroke-width="1"/><rect x="866.5" y="234.5" width="6" height="6" fill="#fafafa" stroke="#d6d6d6" stroke-width="1"/><rect x="866.5" y="263.5" width="6" height="6" fill="#fafafa" stroke="#d6d6d6" stroke-width="1"/><rect x="866.5" y="292.5" width="6" height="6" fill="#fafafa" stroke="#d6d6d6" stroke-width="1"/><rect x="761.5" y="234.5" width="6" height="6" fill="#fafafa" stroke="#d6d6d6" stroke-width="1"/>
<!-- row 1: width -->
<g transform="translate(620.6 135.3)"><path d="M3.700 0.400C1.600 3.600 0.400 5.800 0.400 7.600L2 10.400H5.400L7 7.600C7 5.800 5.800 3.600 3.700 0.400Z" stroke="#222" stroke-width="1" fill="none"/><path d="M3.700 1.200V7" stroke="#222" stroke-width="1"/><rect x="1.700" y="10.600" width="4" height="3.800" stroke="#222" stroke-width="1" fill="none"/></g>
<path d="M634.800 134V149.800" stroke="#222" stroke-width="1.800"/>
<rect x="640.500" y="130.500" width="128" height="23" fill="#fff" stroke="#b9b9b9" stroke-width="1"/>
<rect x="751.500" y="131" width="16.500" height="22" fill="#e6e6e6"/><path d="M751.500 131V153" stroke="#c6c6c6"/>
<path d="M757 140H765L761 144.200Z" fill="#111"/>
<rect x="775.500" y="130.500" width="83" height="23" fill="#e6e6e6" stroke="#b9b9b9" stroke-width="1"/>
<path d="M847 140H855L851 144.200Z" fill="#111"/>
<!-- row 2: colour -->
<g transform="translate(620.6 163.3)"><path d="M3.700 0.400C1.600 3.600 0.400 5.800 0.400 7.600L2 10.400H5.400L7 7.600C7 5.800 5.800 3.600 3.700 0.400Z" stroke="#222" stroke-width="1" fill="none"/><path d="M3.700 1.200V7" stroke="#222" stroke-width="1"/><rect x="1.700" y="10.600" width="4" height="3.800" stroke="#222" stroke-width="1" fill="none"/></g>
<g><rect x="629" y="163" width="3.200" height="3.200" fill="#f07010"/><rect x="632.800" y="163" width="3.200" height="3.200" fill="#18a0e8"/><rect x="629" y="166.800" width="3.200" height="3.200" fill="#e02020"/><rect x="632.800" y="166.800" width="3.200" height="3.200" fill="#f07010"/><rect x="629" y="170.600" width="3.200" height="3.200" fill="#18a038"/><rect x="632.800" y="170.600" width="3.200" height="3.200" fill="#18a0e8"/></g>
<rect x="640.500" y="159.500" width="128" height="23" fill="#fff" stroke="#b9b9b9" stroke-width="1"/>
<rect x="644" y="163" width="104" height="15.600" fill="#161616"/>
<rect x="751.500" y="160" width="16.500" height="22" fill="#e6e6e6"/><path d="M751.500 160V182" stroke="#c6c6c6"/>
<path d="M757 169H765L761 173.200Z" fill="#111"/>
<!-- row 3: style -->
<g transform="translate(620.6 192.3)"><path d="M3.700 0.400C1.600 3.600 0.400 5.800 0.400 7.600L2 10.400H5.400L7 7.600C7 5.800 5.800 3.600 3.700 0.400Z" stroke="#222" stroke-width="1" fill="none"/><path d="M3.700 1.200V7" stroke="#222" stroke-width="1"/><rect x="1.700" y="10.600" width="4" height="3.800" stroke="#222" stroke-width="1" fill="none"/></g>
<path d="M634.800 191.600V207.400" stroke="#222" stroke-width="1.800" stroke-dasharray="1.600 1.200"/>
<rect x="640.500" y="188.500" width="128" height="23" fill="#fff" stroke="#b9b9b9" stroke-width="1"/>
<path d="M641 200.300H751" stroke="#111" stroke-width="1.200"/>
<rect x="751.500" y="189" width="16.500" height="22" fill="#e6e6e6"/><path d="M751.500 189V211" stroke="#c6c6c6"/>
<path d="M757 198H765L761 202.200Z" fill="#111"/>
<path d="M778.600 198.200H782.600V202.200H778.600ZM784.800 198.200H788.800V202.200H784.800ZM791 198.200H795V202.200H791Z" fill="#222"/>
<path d="M622 218.500H873.500" stroke="#d2d2d2" stroke-width="1"/>
<!-- row 4: miter -->
<path d="M621 245 626.600 230H629.400L635 245M624.200 245 628 233.400 631.800 245" stroke="#222" stroke-width="1.500" stroke-linejoin="miter"/>
<rect x="640.500" y="225.500" width="113" height="23" fill="#fff" stroke="#b9b9b9" stroke-width="1"/>
<rect x="736" y="226" width="17" height="22" fill="#e6e6e6"/><path d="M735.500 226V248" stroke="#c6c6c6"/>
<path d="M741.600 234 744.600 230.800 747.600 234ZM741.600 240.400 744.600 243.600 747.600 240.400Z" fill="#111"/>
<!-- corner buttons -->
<rect x="775.500" y="225.500" width="23" height="23" fill="#fcfcfc" stroke="#b9b9b9" stroke-width="1"/>
<rect x="775.500" y="254.500" width="23" height="23" fill="#fcfcfc" stroke="#b9b9b9" stroke-width="1"/>
<rect x="805.500" y="283.500" width="23" height="23" fill="#fcfcfc" stroke="#b9b9b9" stroke-width="1"/>
<g>
<path d="M779 245V229H795V236H786V245Z" fill="#2a2a2a"/><path d="M782.500 245V232.500H795" stroke="#fff" stroke-width="1"/><rect x="781.1" y="231.1" width="2.800" height="2.800" fill="#fff" stroke="#2a2a2a" stroke-width="0.800"/>
<path d="M809 245V233A4 4 0 0 1 813 229H825V236H816V245Z" fill="#2a2a2a"/><path d="M812.500 245V232.500H825" stroke="#fff" stroke-width="1"/><rect x="811.1" y="231.1" width="2.800" height="2.800" fill="#fff" stroke="#2a2a2a" stroke-width="0.800"/>
<path d="M839 245V234L844 229H855V236H846V245Z" fill="#2a2a2a"/><path d="M842.500 245V233.500L843.500 232.500H855" stroke="#fff" stroke-width="1"/><rect x="841.4" y="230.79999999999998" width="2.800" height="2.800" fill="#fff" stroke="#2a2a2a" stroke-width="0.800"/>
</g>
<g>
<rect x="782" y="264" width="13" height="5" fill="#2a2a2a"/><path d="M782 266.500H795" stroke="#fff" stroke-width="1"/><rect x="779.400" y="265" width="3" height="3" fill="#fff" stroke="#2a2a2a" stroke-width="0.900"/>
<path d="M811.500 264H825V269H811.500A2.500 2.500 0 0 1 811.500 264Z" fill="#2a2a2a"/><path d="M813 266.500H825" stroke="#fff" stroke-width="1"/><rect x="811" y="265" width="3" height="3" fill="#fff" stroke="#2a2a2a" stroke-width="0.900"/>
<rect x="839" y="264" width="16" height="5" fill="#2a2a2a"/><path d="M843 266.500H855" stroke="#fff" stroke-width="1"/><rect x="841" y="265" width="3" height="3" fill="#fff" stroke="#2a2a2a" stroke-width="0.900"/>
</g>
<g>
<path d="M779 287H795V303H789V293H779Z" fill="#2a2a2a"/><path d="M779 291.500H790.500V303" stroke="#fff" stroke-width="1"/><rect x="789.1" y="290.1" width="2.800" height="2.800" fill="#fff" stroke="#2a2a2a" stroke-width="0.800"/>
<path d="M809 287H825V303H819V293H809Z" fill="#2a2a2a"/><path d="M809 290.500H822.500V303" stroke="#fff" stroke-width="1"/><rect x="821.100" y="289.100" width="2.800" height="2.800" fill="#fff" stroke="#2a2a2a" stroke-width="0.800"/>
<path d="M839 287H855V303H849V293H839Z" fill="#2a2a2a"/><path d="M839 288.500H853.500V303" stroke="#fff" stroke-width="1"/><rect x="852.1" y="287.1" width="2.800" height="2.800" fill="#fff" stroke="#2a2a2a" stroke-width="0.800"/>
</g>
<path d="M744.400 321H751.600L748 325Z" fill="#111"/>
</svg>
<span class="t" style="left:619.500px;top:56px;font-size:12px;letter-spacing:-0.220px">Свойства объекта</span>
<span class="t" style="left:620px;top:105px;font-size:12px;font-weight:bold;letter-spacing:-0.250px">Абрис</span>
<span class="t" style="left:643.500px;top:134px;letter-spacing:-0.130px">0,2 мм</span>
<span class="t" style="left:779.500px;top:133.500px">миллиме...</span>
<span class="t" style="left:644px;top:229px;letter-spacing:-0.800px">5,0</span>

<!-- VTABS + RIGHT PALETTE -->
<div class="a" style="left:880.500px;top:74px;width:19px;height:82px;background:#dadada"></div>
<div class="a" style="left:880.500px;top:156px;width:19px;height:141px;background:#cde2fa"></div>
<div class="a" style="left:880.500px;top:297px;width:19px;height:157px;background:#dadada"></div>
<div class="a" style="left:880.500px;top:454px;width:19px;height:95px;background:#dadada"></div>
<div class="a" style="left:880.500px;top:549px;width:19px;height:62px;background:#f4f4f4"></div>
<div class="a" style="left:899.500px;top:53px;width:18.500px;height:558px;background:#f4f4f4"></div>
<svg class="a" style="left:880px;top:53px" width="38" height="559" viewBox="880 53 38 559" fill="none">
<path d="M881 156.500H900M881 297.500H900M881 454.500H900M881 549.500H900" stroke="#eeeeee" stroke-width="1"/>
<!-- hints icon -->
<path d="M882.400 79V90.400L885 88L886.800 92.200L888.600 91.400L886.800 87.400H890.200Z" fill="#222"/>
<!-- obj props icon -->
<path d="M887.200 162 891 165.800 887.200 169.600 883.400 165.800Z" fill="#fdfdfd" stroke="#222" stroke-width="1.100"/>
<path d="M885 166.400H889.400L887.200 168.600Z" fill="#f07010"/><path d="M885.600 162.400 888.400 165.200" stroke="#222" stroke-width="1.200"/>
<path d="M890.600 170.500H897M890.600 173H897" stroke="#222" stroke-width="1.100"/>
<path d="M886.800 171.400 888.200 173.200 890 170" stroke="#222" stroke-width="1"/>
<!-- obj manager icon -->
<rect x="883.400" y="303.200" width="5" height="5" stroke="#222" stroke-width="1.200"/>
<path d="M882.300 302.100H884.500V304.300H882.300ZM887.300 302.100H889.500V304.300H887.300ZM882.300 307.100H884.500V309.300H882.300ZM887.300 307.100H889.500V309.300H887.300Z" fill="#222"/>
<path d="M889.600 312.400H897M889.600 314.600H897M889.600 316.700H897" stroke="#333" stroke-width="1"/><circle cx="888.500" cy="312.200" r="0.900" fill="#222"/>
<!-- transform icon -->
<path d="M891 468.400A4.400 4.400 0 1 0 889.600 472.200" stroke="#222" stroke-width="1.100"/>
<path d="M889.800 468.200 892.200 468.600 891.200 470.800Z" fill="#222"/>
<path d="M890.800 462.300H896.400M893.600 459.500V465.100" stroke="#222" stroke-width="1"/>
<path d="M890.400 462.300 891.800 461.100V463.500ZM896.800 462.300 895.400 461.100V463.500ZM893.600 459.100 892.400 460.500H894.800ZM893.600 465.500 892.400 464.100H894.800Z" fill="#222"/>
<!-- plus -->
<circle cx="889.700" cy="575.600" r="7.800" stroke="#bcbcbc" stroke-width="1.200"/>
<path d="M884.700 575.600H894.700M889.700 570.600V580.600" stroke="#bcbcbc" stroke-width="1.600"/>
<!-- palette top -->
<path d="M902 56.500H903M906 56.500H907M910 56.500H911M914 56.500H915M904 58.500H905M908 58.500H909M912 58.500H913M902 60.500H903M906 60.500H907M910 60.500H911M914 60.500H915" stroke="#b4b4b4" stroke-width="1"/><path d="M899.500 54V611" stroke="#fbfbfb" stroke-width="1"/>
<path d="M906.600 65.200V73L911.200 69.100Z" fill="#111"/>
<path d="M905.400 87 910 82.400" stroke="#bdbdbd" stroke-width="1.600"/><path d="M909.600 82.800 911.600 80.800" stroke="#b4b4b4" stroke-width="2.800" stroke-linecap="round"/>
<path d="M904.400 102 909.200 97.200 914 102" stroke="#c0c4c8" stroke-width="2"/>
<rect x="900" y="108" width="18" height="460.500" fill="#555"/>
<rect x="901" y="109.200" width="16" height="15.200" fill="#fff"/>
<path d="M901.600 109.800 916.400 123.800M916.400 109.800 901.600 123.800" stroke="#222" stroke-width="1"/>
<rect x="901" y="125.6" width="16" height="15.800" fill="#161616"/><rect x="901" y="142.6" width="16" height="15.800" fill="#333333"/><rect x="901" y="159.6" width="16" height="15.800" fill="#4d4d4d"/><rect x="901" y="176.6" width="16" height="15.800" fill="#666666"/><rect x="901" y="193.6" width="16" height="15.800" fill="#808080"/><rect x="901" y="210.6" width="16" height="15.800" fill="#999999"/><rect x="901" y="227.6" width="16" height="15.800" fill="#b3b3b3"/><rect x="901" y="244.6" width="16" height="15.800" fill="#cccccc"/><rect x="901" y="261.6" width="16" height="15.800" fill="#dcdcdc"/><rect x="901" y="278.6" width="16" height="15.800" fill="#ececec"/><rect x="901" y="295.6" width="16" height="15.800" fill="#ffffff"/><rect x="901" y="312.6" width="16" height="15.800" fill="#3b2d8f"/><rect x="900" y="328.5" width="18" height="18" fill="#fff"/><rect x="901.300" y="329.9" width="15.400" height="15.200" fill="#009fd4"/><rect x="901" y="346.6" width="16" height="15.800" fill="#00a651"/><rect x="901" y="363.6" width="16" height="15.800" fill="#f9e11e"/><rect x="901" y="380.6" width="16" height="15.800" fill="#dc2b1e"/><rect x="901" y="397.6" width="16" height="15.800" fill="#e6007e"/><rect x="901" y="414.6" width="16" height="15.800" fill="#a6398e"/><rect x="901" y="431.6" width="16" height="15.800" fill="#f08200"/><rect x="901" y="448.6" width="16" height="15.800" fill="#ffb6b9"/><rect x="901" y="465.6" width="16" height="15.800" fill="#7d6a63"/><rect x="901" y="482.6" width="16" height="15.800" fill="#dcd4f0"/><rect x="901" y="499.6" width="16" height="15.800" fill="#b3a4dc"/><rect x="901" y="516.6" width="16" height="15.800" fill="#7d93d0"/><rect x="901" y="533.6" width="16" height="15.800" fill="#8c6fc4"/><rect x="901" y="550.6" width="16" height="15.800" fill="#9489b8"/>
<rect x="900" y="567" width="18" height="1.500" fill="#2a3a6a"/>
<path d="M904.600 573.600 909.200 578.400 913.800 573.600" stroke="#b6b6b6" stroke-width="1.500"/>
<path d="M905.200 591.400 908.600 595 905.200 598.600M909.800 591.400 913.200 595 909.800 598.600" stroke="#b0b0b0" stroke-width="1.100"/>
</svg>
<span class="t" style="left:890.500px;top:73.500px;font-size:12.500px;">?</span><span class="t" style="left:719.800px;top:74px;font-size:10.500px;">?</span>
<span class="t vt" style="top:98px;letter-spacing:-0.600px">Советы</span>
<span class="t vt" style="top:182px;letter-spacing:-0.380px">Свойства объекта</span>
<span class="t vt" style="top:321.500px;letter-spacing:-0.050px">Диспетчер объектов</span>
<span class="t vt" style="top:479px;letter-spacing:-0.500px">Преобр<span style="letter-spacing:-1.300px">...</span></span>
</body>
</html>
